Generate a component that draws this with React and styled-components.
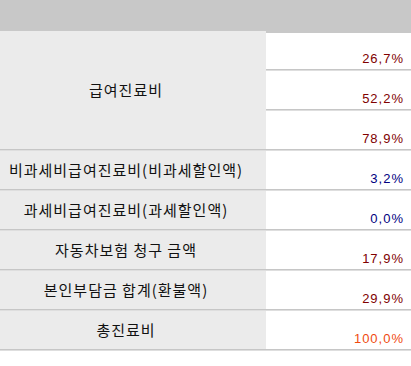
import React from "react"
import styled, {createGlobalStyle} from "styled-components"

const GlobalStyle = createGlobalStyle`
  body {
    margin: 0;
    background: #fff;
    font-family: "Noto Sans CJK KR", "Noto Sans", sans-serif;
  }
`

const rows = [
  {label: "급여진료비", span: 3, values: [
    {text: "26,7%", tone: "red"},
    {text: "52,2%", tone: "red"},
    {text: "78,9%", tone: "red"},
  ]},
  {label: "비과세비급여진료비(비과세할인액)", values: [{text: "3,2%", tone: "blue"}]},
  {label: "과세비급여진료비(과세할인액)", values: [{text: "0,0%", tone: "blue"}]},
  {label: "자동차보험 청구 금액", values: [{text: "17,9%", tone: "red"}]},
  {label: "본인부담금 합계(환불액)", values: [{text: "29,9%", tone: "red"}]},
  {label: "총진료비", values: [{text: "100,0%", tone: "orange"}]},
]

const tones = {
  red: "#800000",
  blue: "#000080",
  orange: "#f04a10",
}

function App() {
  let first = true
  return (
    <>
      <GlobalStyle />
      <Table>
        <Header />
        {rows.map((row) => (
          <React.Fragment key={row.label}>
            <Label $span={row.span || 1}>{row.label}</Label>
            {row.values.map((v) => {
              const isFirst = first
              first = false
              return (
                <Value key={v.text} $first={isFirst} $tone={tones[v.tone]}>
                  {v.text}
                </Value>
              )
            })}
          </React.Fragment>
        ))}
      </Table>
    </>
  )
}

export default App

const Table = styled.div`
  display: grid;
  grid-template-columns: 266px 1fr;
  grid-template-rows: 31px;
  grid-auto-rows: 40px;
  width: 411px;
`

const Header = styled.div`
  grid-column: 1 / span 2;
  background: #c8c8c8;
`

const Label = styled.div`
  grid-column: 1;
  grid-row: span ${(p) => p.$span};
  display: flex;
  align-items: center;
  justify-content: center;
  padding: 0 14px 4px 0;
  background: #ebebeb;
  box-shadow: inset 0 -1px 0 #dedede, inset 0 -2px 0 #c6c6c6;
  font-size: 15px;
  letter-spacing: 1px;
  color: #111;
`

const Value = styled.div`
  grid-column: 2;
  display: flex;
  align-items: flex-end;
  justify-content: flex-end;
  padding: 0 7px 5px 0;
  background: #fff;
  border-top: ${(p) => (p.$first ? "2px solid #c8c8c8" : "none")};
  box-shadow: inset 0 -1px 0 #dedede, inset 0 -2px 0 #c6c6c6;
  font-family: "Liberation Sans", Arial, sans-serif;
  font-size: 13px;
  letter-spacing: 1px;
  color: ${(p) => p.$tone};
`
